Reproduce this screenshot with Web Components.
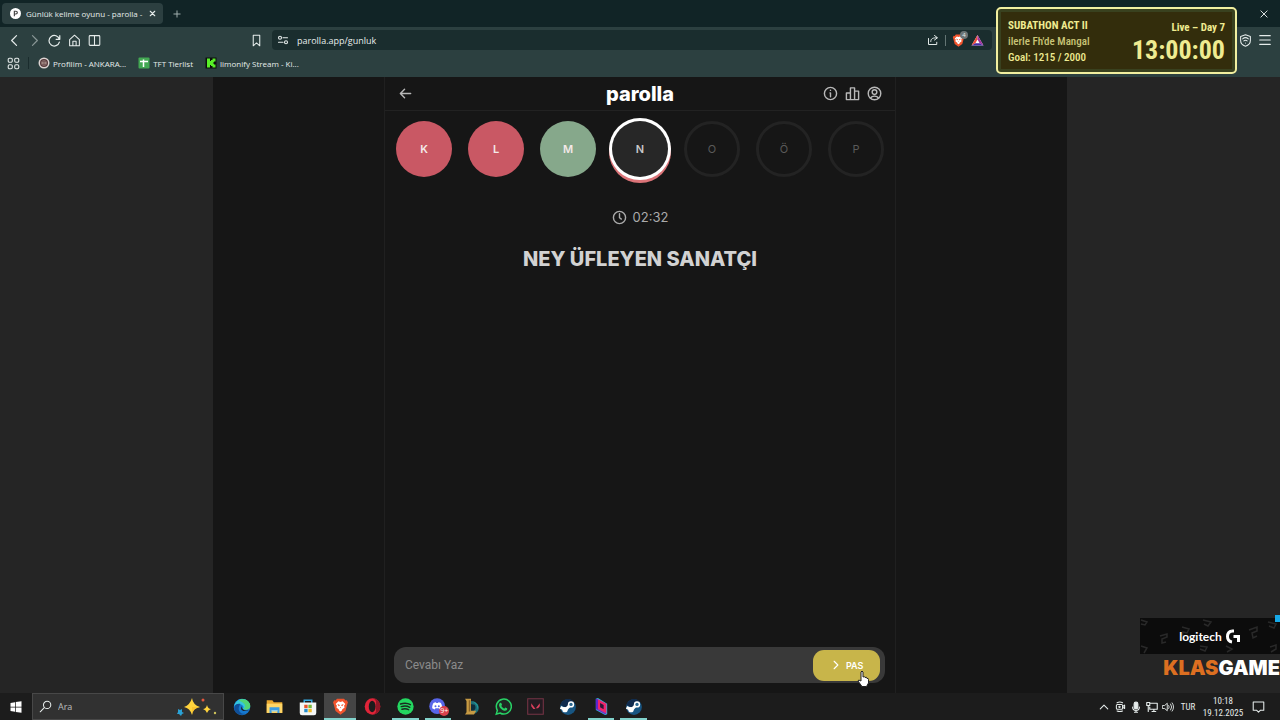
<!DOCTYPE html>
<html lang="tr">
<head>
<meta charset="utf-8">
<title>Günlük kelime oyunu - parolla</title>
<style>
  body {
    margin: 0;
    background: #252525;
    font-family: "Open Sans", "Noto Sans", sans-serif;
    font-size: 8px;
    color: #e6eceb;
  }
</style>
</head>
<body>
<desktop-screen>
  <browser-window slot="window">
    <browser-tab slot="tab">Günlük kelime oyunu - parolla -</browser-tab>
    <bookmark-link slot="bookmark" icon="profile">Profilim - ANKARA...</bookmark-link>
    <bookmark-link slot="bookmark" icon="sheet">TFT Tierlist</bookmark-link>
    <bookmark-link slot="bookmark" icon="kick">limonify Stream - Ki...</bookmark-link>
    <parolla-game>
      <letter-badge slot="letter" state="wrong">K</letter-badge>
      <letter-badge slot="letter" state="wrong">L</letter-badge>
      <letter-badge slot="letter" state="correct">M</letter-badge>
      <letter-badge slot="letter" state="active">N</letter-badge>
      <letter-badge slot="letter">O</letter-badge>
      <letter-badge slot="letter">Ö</letter-badge>
      <letter-badge slot="letter">P</letter-badge>
      <span slot="time">02:32</span>
      <span slot="question">NEY ÜFLEYEN SANATÇI</span>
    </parolla-game>
  </browser-window>
  <task-bar slot="taskbar">
    <task-icon name="edge" label="Edge"></task-icon>
    <task-icon name="files" label="Dosya Gezgini"></task-icon>
    <task-icon name="store" label="Store"></task-icon>
    <task-icon name="brave" label="Brave" active open></task-icon>
    <task-icon name="opera" label="Opera"></task-icon>
    <task-icon name="spotify" label="Spotify" open></task-icon>
    <task-icon name="discord" label="Discord" open></task-icon>
    <task-icon name="league" label="League of Legends"></task-icon>
    <task-icon name="whatsapp" label="WhatsApp"></task-icon>
    <task-icon name="valorant" label="Valorant"></task-icon>
    <task-icon name="steam" label="Steam"></task-icon>
    <task-icon name="prism" label="Prism" open></task-icon>
    <task-icon name="steam" label="Steam" open></task-icon>
  </task-bar>
  <stream-timer slot="overlay">
    <span slot="title">SUBATHON ACT II</span>
    <span slot="message">ilerle Fh'de Mangal</span>
    <span slot="goal">Goal: 1215 / 2000</span>
    <span slot="day">Live – Day 7</span>
    <span slot="clock">13:00:00</span>
  </stream-timer>
  <sponsor-banner slot="overlay"></sponsor-banner>
  <mouse-cursor slot="overlay"></mouse-cursor>
</desktop-screen>

<script>
const line = (size, body, width = 1.5) =>
  `<svg width="${size}" height="${size}" viewBox="0 0 16 16" fill="none" stroke="currentColor" stroke-width="${width}" stroke-linecap="round" stroke-linejoin="round" aria-hidden="true">${body}</svg>`;

const art = (size, body) =>
  `<svg width="${size}" height="${size}" viewBox="0 0 24 24" aria-hidden="true">${body}</svg>`;

const BRAVE = `<path fill="#f2542d" d="M7 1h10l2 2.500 2-.3 1.500 3.300-.8 2L19 18.500 12 23.500 5 18.500 2.300 8.500l-.8-2L3 3.200l2 .3z"/><path fill="#fff" d="M12 5.500l3-.8 3.800 3.800-1.800 2.300.8 2.700-3.500 2.600-.3 1.400-2 1.500-2-1.500-.3-1.400-3.500-2.600.8-2.700-1.800-2.300L9 4.700z"/><path fill="#f2542d" d="M7.500 8.500l3 1 .5 1.500-1.500.5zM16.500 8.500l-3 1-.5 1.500 1.500.5zM11 13h2l-1 1.500z"/>`;

const icons = {
  profile: art(12, `<circle cx="12" cy="12" r="11" fill="#ddd4d2"/><circle cx="12" cy="12" r="8" fill="#56383a"/><circle cx="12" cy="12" r="5.500" fill="#9e8580"/><path d="M7 15h10M8 9h8M12 6v12" stroke="#715456" stroke-width="1.500"/>`),
  sheet: art(12, `<rect x="1" y="1" width="22" height="22" rx="2" fill="#43a853"/><path d="M4 9h16M11 5v15" stroke="#fff" stroke-width="3"/>`),
  kick: art(12, `<path fill="#0b100b" d="M1 1h22v22H1z"/><path fill="#58ee28" d="M4 3h6v5h2V6h3V3h6v6h-3v2h-2v2h2v2h3v6h-6v-3h-3v-2h-2v5H4z"/>`),
  edge: art(18, `<circle cx="12" cy="12" r="11" fill="#1678cf"/><path fill="#34c6de" d="M1.500 11C3 .5 17-2.500 22 7c2.500 6-1.500 9-6 8.500-3 0-3-1.500-2-3C14 8 5 6 1.500 11z"/><path fill="#50d477" d="M10 2c9-2.500 15 6 12.500 11-2 3.500-8 3-8.500 1 5-3 1-9-7-10.500z"/><path fill="#104f98" d="M9 9c-4 7 1 13 7 12-7 4-16-2-14-9 1-4 5-5 8-4z"/><path fill="#1c1c1c" d="M12 11c-1 4 4 7 9 5-3 2-9 2-10-1-.3-2 .2-3.200 1-4z"/>`),
  files: art(17, `<path fill="#e9a82f" d="M1 3h8l2 3h12v15H1z"/><path fill="#ffd667" d="M1 8h22v13H1z"/><path fill="#3b9de4" d="M5 13h14v8h-3v-4H8v4H5z"/><path fill="#8bcdf4" d="M8 17h8v2H8z"/>`),
  store: art(18, `<path d="M7 7V3h10v4" fill="none" stroke="#35a9e1" stroke-width="2"/><path fill="#f4f6f6" d="M1 6h22v14q0 3-3 3H4q-3 0-3-3z"/><path fill="#e9532c" d="M7 9h4.500v4.500H7z"/><path fill="#75b83b" d="M12.500 9H17v4.500h-4.500z"/><path fill="#268dcc" d="M7 14.500h4.500V19H7z"/><path fill="#f2ba25" d="M12.500 14.500H17V19h-4.500z"/>`),
  brave: art(17, BRAVE),
  opera: art(17, `<ellipse cx="12" cy="12" rx="11" ry="11.500" fill="#e02438"/><path fill="#8f1727" d="M14 .7C26 3 26 21 14 23.300l3-4V4.700z"/><ellipse cx="11.500" cy="12" rx="4.800" ry="8" fill="#1c1c1c"/>`),
  spotify: art(17, `<circle cx="12" cy="12" r="11.500" fill="#23d760"/><path d="M5 8.500q8-2.500 14 1M6 12.200q7-2 12 1M7 15.800q5.500-1.500 9.500.8" fill="none" stroke="#1b2a20" stroke-width="2" stroke-linecap="round"/>`),
  discord: art(20, `<circle cx="11" cy="11" r="9.500" fill="#5865e9"/><path fill="#fff" d="M5 13.500c0-3 1-6 2-6.500l2.500-.8.5 1h2l.5-1L15 7c1 .5 2 3.500 2 6.500L14 15l-1-1.500H9L8 15z"/><circle cx="9" cy="11" r="1.200" fill="#5865e9"/><circle cx="13" cy="11" r="1.200" fill="#5865e9"/>`),
  league: art(18, `<path fill="#1e6f79" d="M10 4c15-1 16 16 5 17h-5z"/><path fill="#0d2c3c" d="M11 8l6 1q3 6-3 9h-3z"/><path fill="#20a0a0" d="M13 4q11 3 8 12 0-8-8-12z"/><path fill="#c79a43" d="M4 1h8v16h7l-3 5H4l2-3V4z"/><path fill="#8b6529" d="M9 3h2v15H9z"/>`),
  whatsapp: art(18, `<path d="M3 21.500l1.500-5A10 10 0 1 1 8 20z" fill="#202a24" stroke="#28d366" stroke-width="2"/><path fill="#28d366" d="M7 8c1-2.500 2.500-2 3-.7l.7 1.800-1 1.500q1.300 2.500 4 3.600l1.300-1.400 2.700 1.300c.2 3-3 3.500-5 2.500-3.500-1.500-7-5.500-5.700-8.600z"/>`),
  valorant: art(17, `<path fill="#231b21" stroke="#753445" stroke-width="1.500" d="M1 1h22v22H1z"/><path fill="#dc405d" d="M6 7.500l6 8H9l-3-4zM18 7.500v4l-2.500 3h-3z"/>`),
  steam: art(18, `<circle cx="12" cy="12" r="10.500" fill="#175582"/><path fill="#102b4e" d="M2 9a10.500 10.500 0 0 1 18-4l-7 4-4 4z"/><path d="M2 12.500l7 3L16 8" fill="none" stroke="#fff" stroke-width="4"/><circle cx="8" cy="15.500" r="3.600" fill="#fff"/><circle cx="16" cy="8.500" r="4.200" fill="#fff"/><circle cx="16" cy="8.500" r="2.200" fill="#2a668f"/>`),
  prism: art(17, `<path fill="#29b8e6" d="M4 1l3-1 13 8v15l-3 1-13-7z"/><path fill="#ed246c" d="M6 1l13 7v14L6 15z"/><path fill="#5b24d0" d="M4 1l3 1v14l-3-1z"/><path fill="#2a1638" d="M10 7l5 3v6l-5-3z"/><path fill="#7f24c0" d="M6 15l13 7-2 1-13-7z"/>`)
};

// Registers an element whose shadow root is cloned from the given markup.
const define = (name, markup, setup) => {
  const template = document.createElement("template");
  template.innerHTML = markup;
  customElements.define(name, class extends HTMLElement {
    constructor() {
      super();
      this.attachShadow({ mode: "open" });
      this.shadowRoot.appendChild(template.content.cloneNode(true));
    }

    connectedCallback() {
      if (setup) setup(this, this.shadowRoot);
    }
  });
};

define("desktop-screen", `
<style>
:host {
  display: grid;
  grid-template-rows: 1fr auto;
  min-height: 100vh;
  position: relative;
  overflow: hidden;
}
</style>
<slot name="window"></slot>
<slot name="taskbar"></slot>
<slot name="overlay"></slot>
`);

const RESET = `
button {
  display: inline-flex;
  align-items: center;
  justify-content: center;
  padding: 0;
  border: 0;
  background: none;
  color: inherit;
  font: inherit;
}
svg { display: block; flex: none; }
`;

define("browser-window", `
<style>
${RESET}
:host {
  display: grid;
  grid-template-rows: auto auto 1fr;
}
.tabs {
  display: flex;
  align-items: center;
  height: 27px;
  padding: 0 8px 0 2px;
  background: #112426;
}
.new { width: 28px; color: #a7b5b4; }
.window { margin-left: auto; display: flex; gap: 16px; }
.window button { width: 16px; }
.toolbar { padding-bottom: 4px; background: #2c4040; }
.nav, .bookmarks {
  display: flex;
  align-items: center;
  padding: 0 5px 0 4px;
}
.nav { height: 26px; }
.bookmarks { height: 20px; }
.nav > button { width: 20px; height: 20px; }
.dim { opacity: 0.5; }
.spacer { flex: 0 0 142px; }
.address {
  display: flex;
  align-items: center;
  flex: 1;
  height: 20px;
  margin: 0 243px 0 6px;
  padding: 0 8px 0 5px;
  border-radius: 4px;
  background: #1a2d2e;
  gap: 6px;
}
input {
  flex: 1;
  min-width: 0;
  padding: 0 0 0 2px;
  border: 0;
  outline: 0;
  background: none;
  color: #e6eceb;
  font: 9px "Open Sans", "Noto Sans", sans-serif;
}
.bar { width: 1px; height: 11px; background: #647574; }
.shield { position: relative; }
.count {
  position: absolute;
  top: -3px;
  right: -3px;
  width: 8px;
  border-radius: 4px;
  background: #6b7476;
  font-size: 6px;
  line-height: 8px;
  text-align: center;
}
.bookmarks { gap: 12px; }
.bookmarks .apps { width: 18px; }
.sep { width: 1px; height: 12px; background: #1a2c2d; margin: 0 -3px 0 -6px; }
</style>
<div class="tabs">
  <slot name="tab"></slot>
  <button class="new" aria-label="Yeni sekme">${line(10, '<path d="M8 3v10M3 8h10"/>')}</button>
  <div class="window">
    <button aria-label="Geri yükle">${line(10, '<path d="M2 5h9v9H2zM5 5V2h9v9h-3"/>')}</button>
    <button aria-label="Kapat">${line(10, '<path d="M3 3l10 10M13 3L3 13"/>')}</button>
  </div>
</div>
<div class="toolbar">
  <div class="nav">
    <button aria-label="Geri">${line(13, '<path d="M10.500 2L4.500 8l6 6"/>')}</button>
    <button class="dim" aria-label="İleri">${line(13, '<path d="M5.500 2l6 6-6 6"/>')}</button>
    <button aria-label="Yenile">${line(13, '<path d="M14 6.500A6.500 6.500 0 1 0 14 10M14.500 2v4.500H10"/>')}</button>
    <button aria-label="Ana sayfa">${line(13, '<path d="M2 7l6-5.500L14 7v7.500H2zM6 14.500V9h4v5.500"/>', 1.300)}</button>
    <button aria-label="Bölünmüş görünüm">${line(13, '<rect x="1.500" y="2" width="13" height="12" rx="1"/><path d="M8 2v12"/>', 1.300)}</button>
    <span class="spacer"></span>
    <button aria-label="Yer imi">${line(13, '<path d="M4 1.500h8v13L8 11l-4 3.500z"/>', 1.300)}</button>
    <div class="address">
      ${line(12, '<circle cx="4" cy="5" r="2"/><path d="M8 5h6M2 11h6"/><circle cx="12" cy="11" r="2"/>')}
      <input aria-label="Adres" value="parolla.app/gunluk">
      <button aria-label="Paylaş">${line(12, '<path d="M2 6v8h11v-3M5 10c0-4 3-5 8-5M10 2l4 3-4 3"/>', 1.300)}</button>
      <span class="bar"></span>
      <button class="shield" aria-label="Brave Shields">${art(13, BRAVE)}<span class="count">4</span></button>
      <button aria-label="Brave Rewards">${art(13, '<path fill="#fff" d="M12 2l11 19H1z"/><path fill="#f04c37" d="M12 2L1 21l7-4 4-7z"/><path fill="#a12f9e" d="M12 2v8l4 7 7 4z"/><path fill="#492ba2" d="M1 21l7-4h8l7 4z"/>')}</button>
    </div>
    <button aria-label="VPN">${line(13, '<path d="M8 1l6 2v5c0 3.500-3 6-6 7-3-1-6-3.500-6-7V3zM4.500 6q3.500-3 7 0M6 8.500q2-1.500 4 0M8 11v.1"/>', 1.300)}</button>
    <button aria-label="Menü">${line(14, '<path d="M2 3h12M2 8h12M2 13h12"/>', 1.300)}</button>
  </div>
  <div class="bookmarks">
    <button class="apps" aria-label="Tüm yer imleri">${line(13, '<rect x="1.500" y="1.500" width="5" height="5" rx="1.500"/><rect x="9.500" y="1.500" width="5" height="5" rx="1.500"/><rect x="1.500" y="9.500" width="5" height="5" rx="1.500"/><rect x="9.500" y="9.500" width="5" height="5" rx="1.500"/>', 1.300)}</button>
    <span class="sep"></span>
    <slot name="bookmark"></slot>
  </div>
</div>
<slot></slot>
`);

define("browser-tab", `
<style>
${RESET}
:host {
  display: flex;
  align-items: center;
  gap: 5px;
  box-sizing: border-box;
  width: 161px;
  height: 21px;
  padding: 0 6px 0 8px;
  border-radius: 4px;
  background: #2c3f40;
}
span { flex: 1; white-space: nowrap; }
</style>
${art(11, '<circle cx="12" cy="12" r="12" fill="#fff"/><path d="M9.500 18V7h3.500a3 3 0 0 1 0 6H9.500" fill="none" stroke="#444" stroke-width="2.500"/>')}
<span><slot></slot></span>
<button aria-label="Sekmeyi kapat">${line(9, '<path d="M4 4l8 8M12 4l-8 8"/>', 2)}</button>
`);

define("bookmark-link", `
<style>
:host { display: block; }
a {
  display: flex;
  align-items: center;
  gap: 3px;
  color: inherit;
  text-decoration: none;
  white-space: nowrap;
}
i { display: flex; }
</style>
<a href="#"><i></i><slot></slot></a>
`, (host, root) => {
  root.querySelector("i").innerHTML = icons[host.getAttribute("icon")];
});

define("parolla-game", `
<style>
${RESET}
:host {
  display: flex;
  justify-content: center;
  font-family: Inter, Roboto, sans-serif;
  color: #d2d2d2;
}
.page {
  display: flex;
  justify-content: center;
  width: 66.7%;
  background: #161616;
}
main {
  display: flex;
  flex-direction: column;
  box-sizing: border-box;
  width: 60%;
  border: solid #202020;
  border-width: 0 1px;
}
header {
  display: grid;
  grid-template-columns: 1fr auto 1fr;
  align-items: center;
  height: 33px;
  padding: 0 13px;
  border-bottom: 1px solid #222;
}
header button { color: #b8b8b8; }
.back { justify-self: start; }
h1 {
  margin: 0;
  color: #fff;
  font-size: 20px;
  line-height: 24px;
  font-weight: 800;
}
nav { display: flex; justify-content: end; gap: 7px; }
.letters {
  display: flex;
  justify-content: center;
  gap: 16px;
  padding: 10px 0 32px;
}
.time {
  display: flex;
  align-items: center;
  justify-content: center;
  gap: 6px;
  color: #aaa;
  font-size: 13px;
  line-height: 16px;
}
h2 {
  margin: 20px 0 0;
  font-size: 20px;
  line-height: 28px;
  font-weight: 800;
  text-align: center;
}
form {
  display: flex;
  align-items: center;
  height: 36px;
  box-sizing: border-box;
  margin: auto 10px 10px 9px;
  padding: 0 5px 0 11px;
  border-radius: 12px;
  background: #393939;
}
input {
  flex: 1;
  min-width: 0;
  padding: 0;
  border: 0;
  outline: 0;
  background: none;
  color: #ddd;
  font: 12px Roboto, sans-serif;
}
input::placeholder { color: #8b8b8b; opacity: 1; }
form button {
  gap: 4px;
  width: 67px;
  height: 31px;
  border-radius: 11px;
  background: #c8b54a;
  color: #fff;
  font-size: 9px;
  font-weight: 600;
}
</style>
<div class="page">
  <main>
    <header>
      <button class="back" aria-label="Geri">${line(15, '<path d="M13.500 8H3M7 3.500L2.500 8 7 12.500"/>')}</button>
      <h1>parolla</h1>
      <nav>
        <button aria-label="Bilgi">${line(15, '<circle cx="8" cy="8" r="6.500"/><path d="M7.500 7.500H8v4M8 4.600v.1"/>')}</button>
        <button aria-label="İstatistik">${line(15, '<path d="M1.500 14.500V7.500h4.300v7zM5.800 14.500V2h4.400v12.500zM10.200 5.500h4.300v9h-4.300z"/>')}</button>
        <button aria-label="Profil">${line(15, '<circle cx="8" cy="8" r="6.700"/><circle cx="8" cy="6.500" r="2.500"/><path d="M3.800 13c1-3 7.400-3 8.400 0"/>')}</button>
      </nav>
    </header>
    <div class="letters"><slot name="letter"></slot></div>
    <div class="time">${line(15, '<circle cx="8" cy="8" r="6.500"/><path d="M8 4v4.200l2 1.500"/>')}<slot name="time"></slot></div>
    <h2><slot name="question"></slot></h2>
    <form>
      <input aria-label="Cevap" placeholder="Cevabı Yaz">
      <button type="button">${line(12, '<path d="M5.500 3l5 5-5 5"/>')}PAS</button>
    </form>
  </main>
</div>
`);

define("letter-badge", `
<style>
:host {
  display: flex;
  align-items: center;
  justify-content: center;
  box-sizing: border-box;
  width: 56px;
  height: 56px;
  border-radius: 50%;
  border: 3px solid #232323;
  color: #5a5a5a;
  font-size: 11px;
  line-height: 16px;
}
:host([state]) { border: 0; color: #f4e9e9; font-weight: 600; }
:host([state="wrong"]) { background: #c95864; }
:host([state="correct"]) { background: #86a88b; }
:host([state="active"]) {
  background: #272727;
  color: #c8c8c8;
  box-shadow: 0 0 0 3px #fff, 0 3px 0 3px #db7478;
}
</style>
<slot></slot>
`);

define("task-bar", `
<style>
${RESET}
:host {
  display: flex;
  align-items: stretch;
  height: 27px;
  background: #1c1c1c;
}
.start { width: 32px; color: #fff; }
label {
  display: flex;
  align-items: center;
  gap: 6px;
  box-sizing: border-box;
  width: 192px;
  padding: 0 5px 0 6px;
  border: 1px solid #484848;
  background: #313131;
}
input {
  flex: 1;
  min-width: 0;
  padding: 0;
  border: 0;
  outline: 0;
  background: none;
  font: 9px "Open Sans", "Noto Sans", sans-serif;
}
input::placeholder { color: #bdbdbd; opacity: 1; }
.apps {
  display: grid;
  grid-auto-flow: column;
  grid-auto-columns: 1fr;
  width: 424px;
  margin-left: 2px;
}
.tray {
  display: flex;
  align-items: center;
  margin-left: auto;
  padding-right: 14px;
}
.tray button { width: 16px; }
.tray .lang { width: 24px; }
.lang, time {
  font-family: "Roboto Condensed", Roboto, sans-serif;
  font-size: 9px;
}
time {
  width: 46px;
  margin-right: 4px;
  line-height: 12px;
  text-align: center;
}
</style>
<button class="start" aria-label="Başlat">${art(12, '<path fill="currentColor" d="M1 4l9-1.500v9H1zM11.500 2.200L23 .5v11H11.500zM1 13h9v8.500L1 20zM11.500 13H23v10.500l-11.500-1.700z"/>')}</button>
<label>
  ${line(13, '<circle cx="10" cy="6" r="4.500"/><path d="M6.500 9.500l-5 5"/>', 1.300)}
  <input aria-label="Ara" placeholder="Ara">
  <svg width="42" height="22" viewBox="0 0 42 22" aria-hidden="true">
    <path fill="#ffd33c" d="M16 2q1 7 8 9-7 1-8 8-2-7-8-8 6-2 8-9z"/>
    <path fill="#f6b927" d="M16 11h8q-7 1-8 8z" opacity=".6"/>
    <path fill="#ffd33c" d="M31 9q1 4 4 4-3 1-4 4-1-3-4-4 3 0 4-4z"/>
    <path fill="#2aa1d5" d="M2 13l2 1 2-1v3l2 1-2 1-1 2-2-2H1l1-2z"/>
    <circle cx="27" cy="4" r="1.500" fill="#e3573d"/><circle cx="39" cy="17" r="1.200" fill="#cdc25b"/>
  </svg>
</label>
<div class="apps"><slot></slot></div>
<div class="tray">
  <button aria-label="Gizli simgeler">${line(10, '<path d="M2 11l6-6 6 6"/>', 1.700)}</button>
  <button aria-label="Kamera">${line(11, '<rect x="2" y="5" width="9" height="7" rx="1.500"/><path d="M11 8l3-2v5l-3-2M3 2.500q4-2 8 0M3 14.500q4 1.500 8 0"/><circle cx="6.500" cy="8.500" r="1"/>')}</button>
  <button aria-label="Mikrofon">${line(12, '<rect x="5.500" y="1.500" width="5" height="9" rx="2.500" fill="currentColor"/><path d="M3.500 8c0 6 9 6 9 0M8 12.500V15M6 15h4"/>')}</button>
  <button aria-label="Ağ">${line(12, '<path d="M6 3h9v8H5V8M8 14h5M10.500 11v3M1 2h4v4H1zM3 6v8"/>')}</button>
  <button aria-label="Ses">${line(12, '<path d="M1 6h2.500L7 3v10L3.500 10H1zM9 6q1.500 2 0 4M11.500 4q3 4 0 8M13.500 2.500q4 5.500 0 11"/>', 1.200)}</button>
  <button class="lang">TUR</button>
  <time datetime="2025-12-19T10:18">10:18<br>19.12.2025</time>
  <button aria-label="Bildirimler">${line(13, '<path d="M1.500 2.500h13v10h-4L8 15l-2.500-2.500h-4z"/>', 1.300)}</button>
</div>
`);

define("task-icon", `
<style>
${RESET}
:host { display: flex; }
button { flex: 1; position: relative; }
:host([active]) button { background: #454545; }
:host([open]) button::after {
  content: "";
  position: absolute;
  bottom: 0;
  left: 3px;
  right: 3px;
  height: 2px;
  background: #82d2cb;
}
:host([active]) button::after { left: 0; right: 0; }
.badge {
  position: absolute;
  right: 5px;
  bottom: 4px;
  width: 10px;
  border-radius: 5px;
  background: #d9414c;
  color: #fff;
  font-size: 7px;
  line-height: 10px;
  text-align: center;
}
</style>
<button></button>
`, (host, root) => {
  const $button = root.querySelector("button");
  const name = host.getAttribute("name");
  $button.setAttribute("aria-label", host.getAttribute("label"));
  $button.innerHTML = icons[name];
  if (name === "discord") {
    $button.innerHTML += '<span class="badge">9+</span>';
  }
});

define("stream-timer", `
<style>
:host {
  position: absolute;
  top: 7px;
  right: 43px;
  display: flex;
  justify-content: space-between;
  align-items: center;
  box-sizing: border-box;
  width: 241px;
  height: 67px;
  padding: 2px 10px 0 10px;
  border: 2px solid #f1efa0;
  border-radius: 5px;
  background: #332d0c;
  box-shadow: inset 0 0 0 3px #39411f;
  color: #efeb91;
  font-family: "Roboto Condensed", Roboto, sans-serif;
  font-size: 11px;
  font-weight: 500;
  line-height: 16px;
  white-space: nowrap;
}
div { display: flex; flex-direction: column; }
.right { align-items: end; font-weight: 700; }
.title { font-weight: 700; }
.message { color: #c9c477; }
.clock { font-size: 26px; line-height: 28px; }
</style>
<div>
  <slot class="title" name="title"></slot>
  <slot class="message" name="message"></slot>
  <slot name="goal"></slot>
</div>
<div class="right">
  <slot name="day"></slot>
  <slot class="clock" name="clock"></slot>
</div>
`);

define("sponsor-banner", `
<style>
:host {
  position: absolute;
  right: 0;
  bottom: 41px;
  width: 140px;
  font-family: Inter, sans-serif;
}
.logo {
  position: relative;
  display: flex;
  align-items: center;
  justify-content: center;
  gap: 4px;
  height: 36px;
  background: #0c0c0c;
  color: #fff;
  font-family: Lato, sans-serif;
  font-size: 12px;
}
.logo b, .logo svg { position: relative; }
.logo .pattern { position: absolute; inset: 0; }
.corner {
  position: absolute;
  top: -3px;
  right: 0;
  width: 5px;
  height: 7px;
  background: #16a9e8;
}
.name {
  display: flex;
  justify-content: end;
  padding-top: 4px;
  color: #fff;
  font-size: 20px;
  line-height: 21px;
  font-weight: 900;
}
.name b { color: #dc6f21; font-weight: 900; }
</style>
<div class="logo">
  <svg class="pattern" width="140" height="36" viewBox="0 0 140 36" fill="none" stroke="#292929" stroke-width="1.500" aria-hidden="true">
    <path d="M1 2l6 2-2 3-4-1M20 18l7-2v3l-5 2v4l4-1M42 9l7 2-2 4-4-1-1 4M63 2l8 2-3 4-4-2M60 28l7 1-2 4-5-2M109 12l8-3v4l-5 2 1 5 4-2M128 4l8 2-2 4-5-2M1 28l6 2-3 5M130 29l6-2v4l-5 3M86 28l6 3-5 3"/>
  </svg>
  <b>logitech</b>
  <svg width="15" height="15" viewBox="0 0 15 15" aria-hidden="true"><path d="M6 2C0 3 0 12 6 13" fill="none" stroke="#fff" stroke-width="3"/><path d="M6 2h2M7.500 7.500h5V13" fill="none" stroke="#fff" stroke-width="3"/></svg>
  <span class="corner"></span>
</div>
<div class="name"><b>KLAS</b>GAME</div>
`);

define("mouse-cursor", `
<style>
:host {
  position: absolute;
  left: calc(50% + 217px);
  bottom: 33px;
  pointer-events: none;
}
svg { display: block; }
</style>
<svg width="12" height="17" viewBox="0 0 12 17" aria-hidden="true"><path fill="#fff" stroke="#222" d="M4 10V2q1-2 2 0v5q2-1 2 .5 2-1 2 1 1.500-.5 1.500 1V13l-2 3.500H5L1 11q0-2 3 0z"/></svg>
`);
</script>
</body>
</html>
